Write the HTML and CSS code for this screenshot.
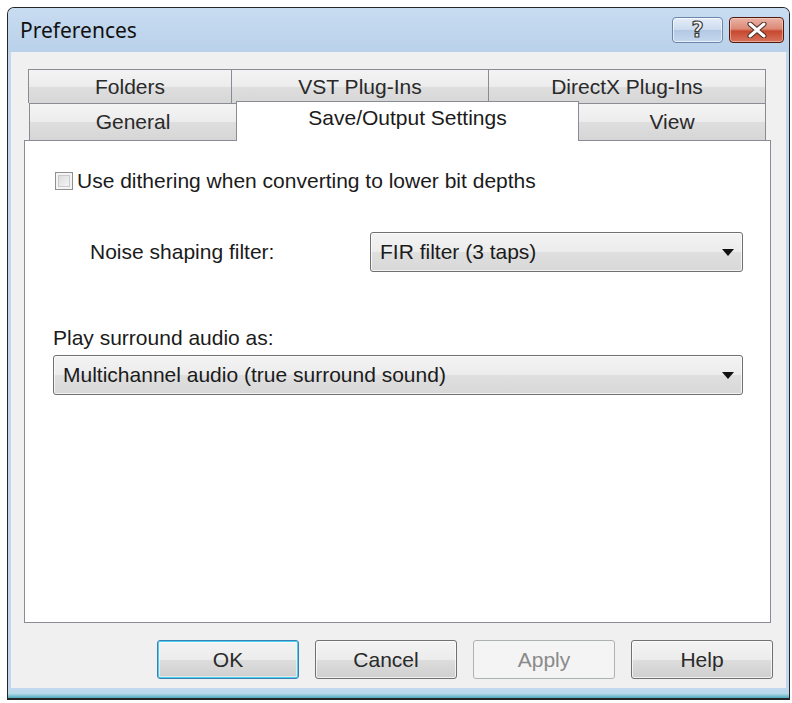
FILE: index.html
```html
<!DOCTYPE html>
<html lang="en">
<head>
  <meta charset="UTF-8" />
  <title>Preferences</title>
  <link rel="stylesheet" href="styles.css">
</head>
<body>
  <div class="window">
    <div class="titlebar">
      <span class="title">Preferences</span>
      <div class="caption-btn help-btn"><span>?</span></div>
      <div class="caption-btn close-btn">
        <svg width="24" height="16" viewBox="0 0 24 16">
          <path d="M5 2 L19 14 M19 2 L5 14" stroke="#4a2a22" stroke-width="5" stroke-linecap="round"/>
          <path d="M5 2 L19 14 M19 2 L5 14" stroke="#fff" stroke-width="3" stroke-linecap="round"/>
        </svg>
      </div>
    </div>

    <div class="client">
      <div class="tabctl">
        <div class="tab-row row-back">
          <div class="tab" style="width:204px">Folders</div>
          <div class="tab" style="width:258px">VST Plug-Ins</div>
          <div class="tab" style="width:278px">DirectX Plug-Ins</div>
        </div>
        <div class="tab-row row-front">
          <div class="tab" style="width:208px">General</div>
          <div class="tab selected" style="width:343px">Save/Output Settings</div>
          <div class="tab" style="width:188px">View</div>
        </div>

        <div class="panel">
          <label class="check-row">
            <span class="checkbox"></span>
            <span>Use dithering when converting to lower bit depths</span>
          </label>

          <div class="field-row">
            <span class="field-label">Noise shaping filter:</span>
            <div class="combo combo-small">
              <span>FIR filter (3 taps)</span>
              <svg width="12" height="7" viewBox="0 0 12 7"><path d="M0 0 H12 L6 7 Z" fill="#111"/></svg>
            </div>
          </div>

          <div class="section-label">Play surround audio as:</div>
          <div class="combo">
            <span>Multichannel audio (true surround sound)</span>
            <svg width="12" height="7" viewBox="0 0 12 7"><path d="M0 0 H12 L6 7 Z" fill="#111"/></svg>
          </div>
        </div>
      </div>

      <div class="buttons">
        <button class="btn btn-default">OK</button>
        <button class="btn">Cancel</button>
        <button class="btn" disabled>Apply</button>
        <button class="btn">Help</button>
      </div>
    </div>
    <div class="frame-bottom"></div>
  </div>
</body>
</html>
```

FILE: styles.css
```css
body {
  margin: 0;
  background: #fff;
  font-family: 'Liberation Sans', Arial, sans-serif;
  font-size: 21px;
  color: #1b1b1b;
}

.window {
  margin: 7px 0 0 7px;
  width: 783px;
  height: 693px;
  box-sizing: border-box;
  border: 1px solid #262626;
  border-bottom-width: 2px;
  border-radius: 7px 7px 0 0;
  background: #c2d7ee;
  display: flex;
  flex-direction: column;
}

.titlebar {
  height: 44px;
  flex-shrink: 0;
  display: flex;
  align-items: center;
  padding: 0 5px 0 12px;
  border-radius: 6px 6px 0 0;
  background: linear-gradient(#c8dcf1, #b9d1ea);
}

.title {
  flex: 1;
  font-family: 'Noto Sans', 'Open Sans', sans-serif;
  font-size: 21px;
  color: #111;
}

.caption-btn {
  height: 26px;
  box-sizing: border-box;
  border-radius: 4px;
  display: flex;
  align-items: center;
  justify-content: center;
}

.help-btn {
  width: 51px;
  margin-right: 6px;
  border: 1px solid #6a87ab;
  background: linear-gradient(#e6eef8 0%, #ccdbee 48%, #b3c9e3 52%, #c5d8ee 100%);
  box-shadow: inset 0 0 0 1px rgba(255,255,255,0.6);
}

.help-btn span {
  font-family: 'DejaVu Sans', sans-serif;
  font-weight: bold;
  font-size: 21px;
  line-height: 1;
  color: #f4f4f4;
  -webkit-text-stroke: 1.2px #3b3b3b;
}

.close-btn {
  width: 55px;
  border: 1px solid #50190e;
  background: linear-gradient(#eab3a6 0%, #dc8a76 45%, #c8482f 55%, #d7735d 100%);
  box-shadow: inset 0 0 0 1px rgba(255,220,210,0.5);
}

.client {
  height: 636px;
  flex-shrink: 0;
  margin: 0 3px;
  background: #f0f0f0;
  display: flex;
  flex-direction: column;
}

.frame-bottom {
  flex: 1;
  background: linear-gradient(#c2d7ee 0%, #b5dbe8 55%, #4fa9bf 100%);
}

.tabctl {
  margin: 17px 15px 0 13px;
}

.tab-row {
  display: flex;
  align-items: flex-start;
}

.row-back {
  height: 34px;
  margin-left: 4px;
}

.row-front {
  height: 37px;
  margin-left: 5px;
}

.tab {
  box-sizing: border-box;
  height: 100%;
  border: 1px solid #898c95;
  border-bottom: none;
  margin-right: -1px;
  background: linear-gradient(#f4f4f4 0%, #ececec 50%, #dedede 51%, #d6d6d6 100%);
  color: #2a2a2a;
  text-align: center;
  line-height: 33px;
  white-space: nowrap;
}

.row-front .tab {
  line-height: 36px;
}

.row-front .tab.selected {
  position: relative;
  z-index: 1;
  height: 40px;
  margin-top: -2px;
  background: #fff;
  color: #1b1b1b;
  line-height: 32px;
}

.panel {
  height: 483px;
  box-sizing: border-box;
  border: 1px solid #898c95;
  background: #fff;
  padding: 31px 27px 0 28px;
}

.check-row {
  display: flex;
  align-items: center;
  height: 18px;
  margin-left: 2px;
}

.checkbox {
  width: 18px;
  height: 18px;
  box-sizing: border-box;
  border: 1px solid #8e8f8f;
  background: linear-gradient(135deg, #d6d6d6, #fbfbfb);
  box-shadow: inset 0 0 0 2px #f4f4f4, inset 0 0 0 3px #c9c9c9;
  margin-right: 4px;
  flex-shrink: 0;
}

.field-row {
  display: flex;
  align-items: center;
  margin-top: 42px;
}

.field-label {
  margin-left: 37px;
}

.combo {
  height: 40px;
  box-sizing: border-box;
  border: 1px solid #707070;
  border-radius: 3px;
  background: linear-gradient(#f3f3f3 0%, #ececec 50%, #dfdfdf 51%, #d8d8d8 100%);
  box-shadow: inset 0 0 0 1px rgba(255,255,255,0.7);
  display: flex;
  align-items: center;
  justify-content: space-between;
  padding: 0 8px 0 9px;
  white-space: nowrap;
}

.combo-small {
  width: 373px;
  margin-left: auto;
}

.section-label {
  margin-top: 54px;
  line-height: 24px;
  margin-bottom: 5px;
}

.buttons {
  display: flex;
  justify-content: flex-end;
  gap: 16px;
  margin: 17px 13px 0 0;
}

.btn {
  width: 142px;
  height: 39px;
  font-family: inherit;
  font-size: 21px;
  color: #2a2a2a;
  border: 1px solid #707070;
  border-radius: 3px;
  background: linear-gradient(#f3f3f3 0%, #ececec 50%, #dddddd 51%, #cfcfcf 100%);
  box-shadow: inset 0 0 0 1px rgba(255,255,255,0.7);
  padding: 0;
}

.btn-default {
  border-color: #3c7fb1;
  box-shadow: inset 0 0 0 1px #48d0f4, inset 0 0 0 2px rgba(255,255,255,0.5);
}

.btn:disabled {
  border-color: #adb2b5;
  background: #f4f4f4;
  color: #8a8a8a;
  box-shadow: none;
}
```
